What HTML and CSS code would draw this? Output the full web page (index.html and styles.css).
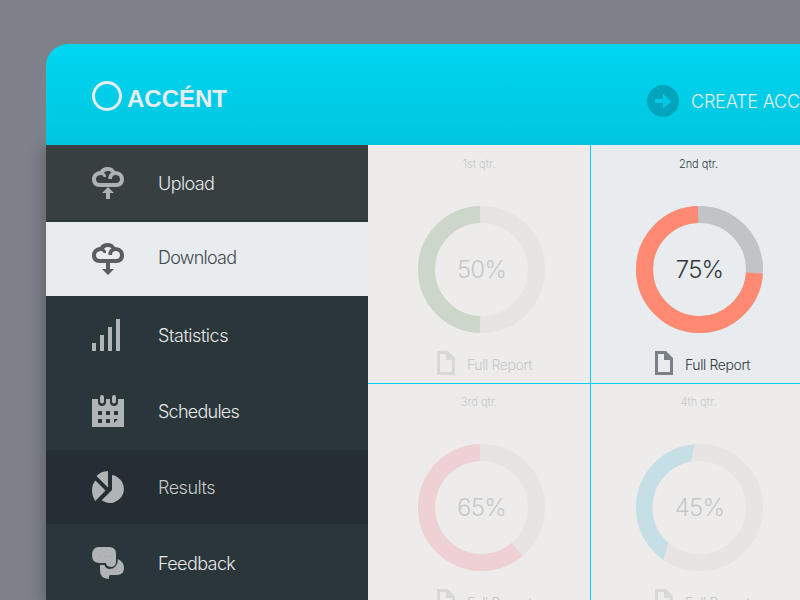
FILE: index.html
```html
<!DOCTYPE html>
<html lang="en">
<head>
<meta charset="utf-8">
<title>Accént</title>
<link rel="stylesheet" href="styles.css">
</head>
<body>
<svg class="defs" width="0" height="0" aria-hidden="true">
  <symbol id="cloud" viewBox="0 0 32 32">
    <path fill="currentColor" fill-rule="evenodd" d="M7.500 20C3 20 0 17 0 12.500C0 8 3 4.500 8 4C9.500 1.500 12.200 0 15.800 0C19 0 21.500 1.500 22.800 4C28.500 4 32 7.500 32 12.500C32 17 29 20 24.500 20ZM8 16H24C26.500 16 28 14.500 28 12C28 9.500 26.200 8 23.500 8C21.300 8 20.200 9 20 12H16.300C16.300 8.800 17.300 6.800 19.500 5.500C18.600 4.500 17.500 4 15.800 4C13.800 4 12.700 4.800 12 6C13.500 6.800 14.200 8.200 14 10H11.500C11.500 8.500 10.300 7.800 8.500 8C5.800 8.200 4 9.700 4 12C4 14.500 5.500 16 8 16Z"/>
  </symbol>
  <symbol id="doc" viewBox="0 0 18 24">
    <path fill="currentColor" fill-rule="evenodd" d="M0 0H11L18 7V24H0ZM3 3V21H15V9H9V3Z"/>
  </symbol>
</svg>
<div class="app">
  <header class="header">
    <div class="brand"><span class="brand-ring"></span><span class="brand-name">ACCÉNT</span></div>
    <a class="create">
      <svg width="32" height="32" viewBox="0 0 32 32"><circle cx="16" cy="16" r="16" fill="#02a5bc"/><path d="M8 14H16V9L24.500 16.500L16 23.500V18H8Z" fill="#02c9e4"/></svg>
      <span>CREATE ACCOUNT</span>
    </a>
  </header>
  <div class="body">
    <nav class="nav">
      <a class="item upload"><svg class="icon" viewBox="0 0 32 32"><use href="#cloud" width="32" height="32"/><path fill="currentColor" d="M16 20L22 26H18V32H14V26H10Z"/></svg><span>Upload</span></a>
      <a class="item active"><svg class="icon" viewBox="0 0 32 32"><use href="#cloud" width="32" height="32"/><path fill="currentColor" d="M14 19H18V26H22L16 32L10 26H14Z"/></svg><span>Download</span></a>
      <a class="item statistics"><svg class="icon" viewBox="0 0 32 32"><path fill="currentColor" d="M0 24H4V32H0ZM8 16H12V32H8ZM16 8H20V32H16ZM24 0H28V32H24Z"/></svg><span>Statistics</span></a>
      <a class="item schedules"><svg class="icon" viewBox="0 0 32 32"><path fill="currentColor" fill-rule="evenodd" d="M0 4H6V7A4 4 0 0 0 14 7V4H18V7A4 4 0 0 0 26 7V4H32V32H0ZM6 16V20H10V16ZM14 16V20H18V16ZM22 16V20H26V16ZM6 24V28H10V24ZM14 24V28H18V24ZM22 24V28L26 24Z"/><rect x="8" y="0" width="4" height="8.500" rx="2" fill="currentColor"/><rect x="20" y="0" width="4" height="8.500" rx="2" fill="currentColor"/></svg><span>Schedules</span></a>
      <a class="item results"><svg class="icon" viewBox="0 0 32 32"><path fill="currentColor" d="M16 0V16.500L4.500 5Q9 .2 16 0ZM3.500 9.500L13.500 19.500L3.300 30Q0 25 0 19Q0 13.500 3.500 9.500ZM20 4.100A14 14 0 1 1 9.700 29.300L20 19Z"/></svg><span>Results</span></a>
      <a class="item feedback"><svg class="icon" viewBox="0 0 32 32"><path fill="currentColor" d="M7 0H17Q24 0 24 7V15Q24 19 20 20Q14 20 14 16H7Q0 15.500 0 8.500Q0 0 7 0Z"/><path fill="currentColor" d="M8 18H12.500Q13.500 22 18 22Q25.500 21.500 26 12Q32 15 32 21Q32 28 25 28H18Q16.500 28.500 17 32Q8 31.500 8 24Z"/><path stroke="#9ca2a2" stroke-dasharray="1 4" d="M8 9.500H20"/></svg><span>Feedback</span></a>
    </nav>
    <main class="grid">
      <section class="card muted">
        <h2>1st qtr.</h2>
        <div class="chart"><svg width="127" height="127" viewBox="0 0 127 127"><circle class="track" cx="63.500" cy="63.500" r="55"/><path class="arc" stroke="#ccd6c9" d="M62 8.520A55 55 0 0 0 62 118.480"/></svg><b>50%</b></div>
        <a class="report"><svg width="18" height="24"><use href="#doc"/></svg><span>Full Report</span></a>
      </section>
      <section class="card right selected">
        <h2>2nd qtr.</h2>
        <div class="chart"><svg width="127" height="127" viewBox="0 0 127 127"><circle class="track" cx="63.500" cy="63.500" r="55"/><path class="arc" stroke="#ff8a71" d="M62 8.520A55 55 0 1 0 118.390 67"/></svg><b>75%</b></div>
        <a class="report"><svg width="18" height="24"><use href="#doc"/></svg><span>Full Report</span></a>
      </section>
      <section class="card muted lower">
        <h2>3rd qtr.</h2>
        <div class="chart"><svg width="127" height="127" viewBox="0 0 127 127"><circle class="track" cx="63.500" cy="63.500" r="55"/><path class="arc" stroke="#efd0d5" d="M62 8.520A55 55 0 1 0 99 105.500"/></svg><b>65%</b></div>
        <a class="report"><svg width="18" height="24"><use href="#doc"/></svg><span>Full Report</span></a>
      </section>
      <section class="card right muted lower">
        <h2>4th qtr.</h2>
        <div class="chart"><svg width="127" height="127" viewBox="0 0 127 127"><circle class="track" cx="63.500" cy="63.500" r="55"/><path fill="#c5dfe6" d="M59 .15A63.500 63.500 0 0 0 27.500 115.900L32 99A47 47 0 0 1 54.500 17.600Z"/></svg><b>45%</b></div>
        <a class="report"><svg width="18" height="24"><use href="#doc"/></svg><span>Full Report</span></a>
      </section>
    </main>
  </div>
</div>
</body>
</html>
```
FILE: styles.css
```css
* { box-sizing: border-box; }
body {
  margin: 0;
  width: 800px;
  height: 600px;
  overflow: hidden;
  padding: 44px 0 0 46px;
  background: #7e8188;
  font-family: Inter, "Liberation Sans", sans-serif;
  font-weight: 300;
}
.defs { display: block; }
.app { width: 754px; }
.header {
  position: relative;
  z-index: 1;
  height: 101px;
  border-radius: 22px 0 0 0;
  background: linear-gradient(#00d6f0, #00c5e0);
  display: flex;
  justify-content: space-between;
  padding-left: 46px;
  color: #e8ecef;
}
.brand { display: flex; gap: 5px; padding-top: 37px; }
.brand-ring { width: 30px; height: 30px; border: 3px solid #e8ecef; border-radius: 50%; }
.brand-name {
  font: bold 24px/36px "Liberation Sans", Arial, sans-serif;
  letter-spacing: 0;
}
.create {
  display: flex;
  gap: 12px;
  width: 153px;
  padding-top: 41px;
  overflow: hidden;
  font-size: 18px;
  line-height: 33px;
  letter-spacing: -.2px;
  white-space: nowrap;
}
.create svg { flex: none; }
.body { display: flex; height: 455px; }
.nav {
  width: 322px;
  background: #2b363a;
  box-shadow: -4px 4px 12px rgba(60, 60, 70, .4);
}
.item {
  display: flex;
  height: 76px;
  padding: 22px 0 0 46px;
  gap: 34px;
  font-size: 18px;
  line-height: 34px;
  letter-spacing: -.6px;
  color: #e6e9eb;
}
.icon { width: 32px; height: 32px; flex: none; color: #b0b4b7; }
.upload { height: 77px; background: #383f41; border-bottom: 2px solid #2b363a; }
.upload .icon { color: #adb2b3; }
.active { height: 74px; padding-top: 21px; background: #e8ecef; color: #42494d; line-height: 30px; letter-spacing: -.75px; }
.active .icon { color: #585d60; }
.statistics { height: 77px; padding-top: 23px; letter-spacing: -.45px; }
.schedules { height: 77px; letter-spacing: -.75px; }
.results { height: 74px; padding-top: 21px; background: #252f33; color: #c5c9cb; letter-spacing: -.5px; }
.feedback { padding-top: 23px; }
.grid {
  display: grid;
  grid-template-columns: 222px 209px;
  grid-template-rows: 238px 216px;
  gap: 1px;
  height: 455px;
  overflow: hidden;
  background: #00d2ec;
}
.card {
  display: flex;
  flex-direction: column;
  align-items: center;
  overflow: hidden;
  background: #edecea;
  color: #c6c8c9;
}
.right { padding-left: 3px; }
.card h2 {
  flex: none;
  margin: 11px 0 0 0;
  font-size: 11px;
  line-height: 17px;
  font-weight: 300;
}
.right h2 { margin-left: 3px; }
.lower h2 { margin-top: 10px; }
.chart {
  flex: none;
  display: grid;
  place-items: center;
  margin: 33px 0 0 5px;
}
.chart > * { grid-area: 1 / 1; }
.chart svg { display: block; }
.chart b { font-size: 24px; font-weight: 300; letter-spacing: -.8px; }
.track { fill: none; stroke: #e7e4e1; stroke-width: 17; }
.arc { fill: none; stroke-width: 17; }
.report {
  flex: none;
  display: flex;
  gap: 12px;
  margin-top: 18px;
  margin-left: 11px;
  font-size: 14px;
  line-height: 28px;
  letter-spacing: -.4px;
}
.report svg { color: #d8d8d7; }
.selected { background: #e8ecef; color: #32383c; }
.selected .track { stroke: #c0c4c7; }
.selected .report svg { color: #7b8086; }
```
